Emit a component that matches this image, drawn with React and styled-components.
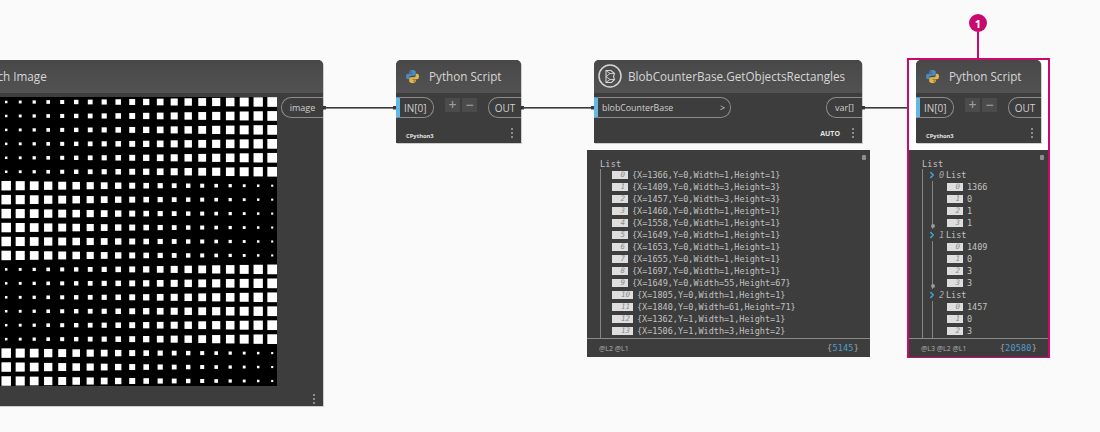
import React from "react";
import styled, { createGlobalStyle } from "styled-components";
import { ChevronRight } from "lucide-react";

const GlobalStyle = createGlobalStyle`
  html, body {
    margin: 0;
    background: #fafafa;
    overflow: hidden;
  }
`;

const sans = `"Open Sans", "Noto Sans", sans-serif`;
const mono = `"DejaVu Sans Mono", "Liberation Mono", monospace`;

const Canvas = styled.div`
  position: relative;
  width: 1100px;
  height: 432px;
  overflow: hidden;
  background: #fafafa;
  font-family: ${sans};
`;

const Wires = styled.svg`
  position: absolute;
  left: 0;
  top: 0;
`;

const Node = styled.div`
  position: absolute;
  left: ${(p) => p.$x}px;
  top: 60px;
  width: ${(p) => p.$w}px;
  display: flex;
  flex-direction: column;
  background: #3d3d3d;
  border-radius: 5px 5px 0 0;
  box-shadow: 1px 1px 0 rgba(0, 0, 0, 0.18);
`;

const Header = styled.div`
  box-sizing: border-box;
  height: 33px;
  display: flex;
  align-items: center;
  gap: ${(p) => p.$gap ?? 10}px;
  padding-left: ${(p) => p.$pad ?? 10}px;
  padding-bottom: 1px;
  background: linear-gradient(#484848, #525252);
  border-radius: 5px 5px 0 0;
  flex-shrink: 0;
`;

const Title = styled.span`
  color: #d6d6d6;
  font-size: 11.7px;
  white-space: nowrap;
`;

const Ports = styled.div`
  display: flex;
  justify-content: space-between;
  align-items: flex-start;
  padding-top: 4px;
`;

const InPort = styled.div`
  box-sizing: border-box;
  width: ${(p) => p.$w}px;
  height: 21px;
  display: flex;
  align-items: center;
  justify-content: space-between;
  padding: 0 5px 0 4px;
  color: #cfcfcf;
  font-size: ${(p) => (p.$big ? 10 : 8.8)}px;
  border: 1px solid #8c8c8c;
  border-left: 4px solid #62b8e2;
  border-radius: 0 10px 10px 0;
`;

const OutPort = styled.div`
  box-sizing: border-box;
  width: ${(p) => p.$w}px;
  height: 21px;
  display: flex;
  align-items: center;
  justify-content: center;
  color: #cfcfcf;
  font-size: ${(p) => (p.$big ? 10 : 9)}px;
  border: 1px solid #8c8c8c;
  border-right: none;
  border-radius: 10px 0 0 10px;
`;

const Stepper = styled.div`
  display: flex;
  gap: 2px;
  margin-top: 1px;
`;

const StepButton = styled.div`
  width: 15px;
  height: 14px;
  display: flex;
  align-items: center;
  justify-content: center;
  background: #4b4b4b;
  color: #999;
  font-size: 14px;
  font-weight: 600;
  line-height: 1;
`;

const Footer = styled.div`
  height: 25px;
  display: flex;
  align-items: center;
  justify-content: flex-end;
  gap: 12px;
  padding: 0 8px 0 10px;
`;

const Engine = styled.span`
  margin-right: auto;
  margin-top: 10px;
  color: #e4e4e4;
  font-size: 5.8px;
  font-weight: 700;
`;

const Lacing = styled.span`
  margin-top: 5px;
  color: #e4e4e4;
  font-size: 7px;
  font-weight: 700;
`;

const Kebab = styled.div`
  display: flex;
  flex-direction: column;
  gap: 2px;
  margin-top: 5px;
  span {
    width: 2px;
    height: 2px;
    background: #8c8c8c;
  }
`;

const ImageBody = styled.div`
  display: flex;
  align-items: flex-start;
  padding-top: 4px;
  gap: 4px;
`;

const ImageFooter = styled.div`
  height: 20px;
  display: flex;
  justify-content: flex-end;
  align-items: center;
  padding-right: 8px;
`;

const Watch = styled.div`
  position: absolute;
  left: ${(p) => p.$x}px;
  top: 150px;
  width: ${(p) => p.$w}px;
  height: 207px;
  display: flex;
  flex-direction: column;
  background: #3d3d3d;
`;

const Corner = styled.div`
  position: absolute;
  top: 5px;
  right: 4px;
  width: 4px;
  height: 5px;
  border-radius: 1px;
  background: #8e8e8e;
`;

const ListArea = styled.div`
  flex: 1;
  min-height: 0;
  display: flex;
  flex-direction: column;
  padding: 8px 0 0 13px;
  font-family: ${mono};
  font-size: 8.5px;
  color: #c2c2c2;
`;

const ListTitle = styled.div`
  height: 11px;
  line-height: 12px;
  letter-spacing: 0.2px;
`;

const Tree = styled.div`
  flex: 1;
  display: flex;
  flex-direction: column;
  border-left: 1.5px solid #858585;
  padding-left: ${(p) => p.$pad}px;
`;

const Row = styled.div`
  height: 12px;
  display: flex;
  align-items: center;
  gap: 4px;
  white-space: nowrap;
`;

const Index = styled.span`
  box-sizing: border-box;
  width: ${(p) => (p.$wide ? 21 : 16)}px;
  height: 8px;
  padding-right: 3px;
  background: #dedede;
  color: #8a8a8a;
  font-size: 7.5px;
  font-style: italic;
  line-height: 8px;
  text-align: right;
  flex-shrink: 0;
`;

const Group = styled.div`
  display: flex;
  flex-direction: column;
  flex: ${(p) => (p.$open ? 1 : "none")};
`;

const GroupHead = styled.div`
  height: 12px;
  display: flex;
  align-items: center;
  white-space: nowrap;
  svg {
    margin-left: -1px;
    flex-shrink: 0;
  }
  i {
    width: 7px;
    margin-left: 2px;
    color: #a8a8a8;
  }
`;

const SubList = styled.div`
  position: relative;
  flex: 1;
  margin-left: 4px;
  border-left: 1.5px solid #858585;
  padding-left: 14px;
  &::after {
    content: "";
    display: ${(p) => (p.$open ? "none" : "block")};
    position: absolute;
    left: -2.5px;
    bottom: 1px;
    width: 4px;
    height: 4px;
    border-radius: 50%;
    background: #9a9a9a;
  }
`;

const WatchFooter = styled.div`
  box-sizing: border-box;
  height: 19px;
  display: flex;
  align-items: center;
  justify-content: space-between;
  padding: 0 11px 0 12px;
  border-top: 1.5px solid #8a8a8a;
  color: #b0b0b0;
  font-size: 7px;
  flex-shrink: 0;
`;

const Count = styled.span`
  font-family: ${mono};
  font-size: 8.5px;
  color: #a8a8a8;
  letter-spacing: 0.2px;
  b {
    font-weight: 400;
    color: #4f9dcb;
  }
`;

const Highlight = styled.div`
  position: absolute;
  left: 907px;
  top: 58px;
  width: 139px;
  height: 296px;
  border: 2px solid #c8096e;
  background: #fff;
`;

const Callout = styled.div`
  position: absolute;
  left: 969px;
  top: 14px;
  width: 18px;
  display: flex;
  flex-direction: column;
  align-items: center;
`;

const Badge = styled.div`
  width: 18px;
  height: 18px;
  border-radius: 50%;
  display: flex;
  align-items: center;
  justify-content: center;
  background: #c8096e;
  color: #fff;
  font-size: 11px;
  font-weight: 700;
`;

const Stem = styled.div`
  width: 2px;
  height: 26px;
  background: #c8096e;
`;

const Dots = () => (
  <Kebab>
    <span />
    <span />
    <span />
  </Kebab>
);

const PythonIcon = () => {
  const half =
    "M12 0C8.6 0 6 .9 6 3.2V6h6.4v1.1H3.6C1.3 7.1 0 9 0 12s1.3 5 3.6 5H6v-3c0-2.2 1.7-3.6 4-3.6h5c1.7 0 3-1.3 3-3V3.2C18 1 15.4 0 12 0z";
  return (
    <svg width="13" height="13" viewBox="0 0 24 24">
      <path d={half} fill="#4a8cc0" />
      <path d={half} fill="#e5b64a" transform="rotate(180 12 12)" />
      <circle cx="9" cy="3.4" r="1.1" fill="#3d3d3d" />
      <circle cx="15" cy="20.6" r="1.1" fill="#3d3d3d" />
    </svg>
  );
};

const BlobIcon = () => (
  <svg width="24" height="24" viewBox="0 0 24 24" fill="none" stroke="#d4d4d4">
    <circle cx="12" cy="12" r="11" strokeWidth="1.5" />
    <path d="M8 6.5h5l3.5 3-1 3 1 3-3 3H8z" strokeWidth="1.1" />
    <path d="M8 6.5l4 3-4 3 4 3-4 3M12 9.5h4.5M12 15.5h4" strokeWidth="0.9" />
  </svg>
);

// halftone picture coming out of the watch image node
const Halftone = () => {
  const cells = [];
  for (let r = 0; r < 21; r++) {
    const rising = Math.floor(r / 6) % 2 === 0;
    for (let c = -3; c < 20; c++) {
      const size = rising ? 2.5 + 0.38 * c : 9.5 - 0.39 * c;
      if (size <= 0) continue;
      const cx = 40 + 6.2 + c * 14;
      const cy = 5 + r * 13.95;
      cells.push(
        <rect key={`${r}-${c}`} x={cx - size / 2} y={cy - size / 2} width={size} height={size} fill="#fff" />
      );
    }
  }
  return (
    <svg width="317" height="289" viewBox="0 0 317 289" style={{ background: "#000", display: "block" }}>
      {cells}
    </svg>
  );
};

const PythonNode = ({ x }) => (
  <Node $x={x} $w={125}>
    <Header>
      <PythonIcon />
      <Title>Python Script</Title>
    </Header>
    <Ports>
      <InPort $w={38} $big>
        IN[0]
      </InPort>
      <Stepper>
        <StepButton>+</StepButton>
        <StepButton>−</StepButton>
      </Stepper>
      <OutPort $w={33} $big>
        OUT
      </OutPort>
    </Ports>
    <Footer>
      <Engine>CPython3</Engine>
      <Dots />
    </Footer>
  </Node>
);

const rects = [
  "{X=1366,Y=0,Width=1,Height=1}",
  "{X=1409,Y=0,Width=3,Height=3}",
  "{X=1457,Y=0,Width=3,Height=3}",
  "{X=1460,Y=0,Width=1,Height=1}",
  "{X=1558,Y=0,Width=1,Height=1}",
  "{X=1649,Y=0,Width=1,Height=1}",
  "{X=1653,Y=0,Width=1,Height=1}",
  "{X=1655,Y=0,Width=1,Height=1}",
  "{X=1697,Y=0,Width=1,Height=1}",
  "{X=1649,Y=0,Width=55,Height=67}",
  "{X=1805,Y=0,Width=1,Height=1}",
  "{X=1840,Y=0,Width=61,Height=71}",
  "{X=1362,Y=1,Width=1,Height=1}",
  "{X=1506,Y=1,Width=3,Height=2}",
];

const groups = [
  [1366, 0, 1, 1],
  [1409, 0, 3, 3],
  [1457, 0, 3],
];

const App = () => (
  <Canvas>
    <GlobalStyle />

    <Wires width="1100" height="432">
      <g fill="#3a3a3a">
        <rect x="323" y="107" width="73" height="1.6" />
        <rect x="323" y="106" width="3" height="3.5" />
        <rect x="393" y="106" width="3" height="3.5" />
        <rect x="521" y="107" width="73" height="1.6" />
        <rect x="521" y="106" width="3" height="3.5" />
        <rect x="591" y="106" width="3" height="3.5" />
        <rect x="862" y="107" width="54" height="1.6" />
        <rect x="862" y="106" width="3" height="3.5" />
        <rect x="913" y="106" width="3" height="3.5" />
      </g>
    </Wires>

    <Node $x={-40} $w={363}>
      <Header $pad={16} $gap={0}>
        <Title>Watch Image</Title>
      </Header>
      <ImageBody>
        <Halftone />
        <OutPort $w={42}>image</OutPort>
      </ImageBody>
      <ImageFooter>
        <Dots />
      </ImageFooter>
    </Node>

    <PythonNode x={396} />

    <Node $x={594} $w={268}>
      <Header $pad={4} $gap={6}>
        <BlobIcon />
        <Title>BlobCounterBase.GetObjectsRectangles</Title>
      </Header>
      <Ports>
        <InPort $w={137}>
          <span>blobCounterBase</span>
          <span>&gt;</span>
        </InPort>
        <OutPort $w={36}>var[]</OutPort>
      </Ports>
      <Footer>
        <Lacing>AUTO</Lacing>
        <Dots />
      </Footer>
    </Node>

    <Watch $x={587} $w={283}>
      <Corner />
      <ListArea>
        <ListTitle>List</ListTitle>
        <Tree $pad={11}>
          {rects.map((text, i) => (
            <Row key={i}>
              <Index $wide={i > 9}>{i}</Index>
              {text}
            </Row>
          ))}
        </Tree>
      </ListArea>
      <WatchFooter>
        <span>@L2 @L1</span>
        <Count>
          {"{"}
          <b>5145</b>
          {"}"}
        </Count>
      </WatchFooter>
    </Watch>

    <Highlight />
    <Callout>
      <Badge>1</Badge>
      <Stem />
    </Callout>

    <PythonNode x={916} />

    <Watch $x={909} $w={139}>
      <Corner />
      <ListArea>
        <ListTitle>List</ListTitle>
        <Tree $pad={5}>
          {groups.map((values, g) => (
            <Group key={g} $open={g === 2}>
              <GroupHead>
                <ChevronRight size={10} strokeWidth={3.5} color="#3fa9d6" />
                <i>{g}</i>
                List
              </GroupHead>
              <SubList $open={g === 2}>
                {values.map((v, i) => (
                  <Row key={i}>
                    <Index>{i}</Index>
                    {v}
                  </Row>
                ))}
              </SubList>
            </Group>
          ))}
        </Tree>
      </ListArea>
      <WatchFooter>
        <span>@L3 @L2 @L1</span>
        <Count>
          {"{"}
          <b>20580</b>
          {"}"}
        </Count>
      </WatchFooter>
    </Watch>
  </Canvas>
);

export default App;
